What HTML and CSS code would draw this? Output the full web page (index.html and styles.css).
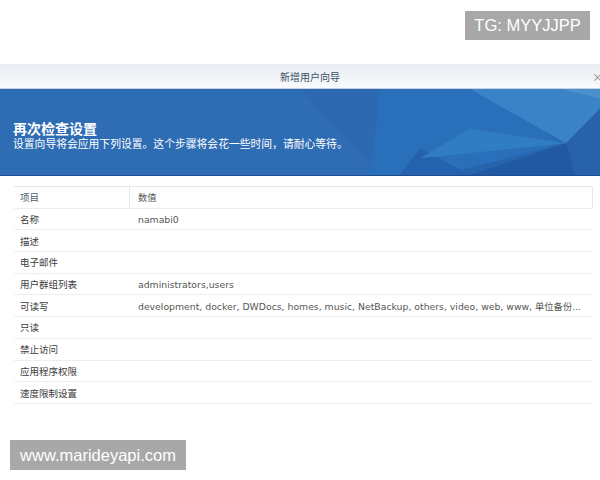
FILE: index.html
```html
<!DOCTYPE html>
<html lang="zh-CN">
<head>
  <meta charset="UTF-8">
  <title>新增用户向导</title>
  <link rel="stylesheet" href="styles.css">
</head>
<body>
<div class="page">
  <div class="top-space"></div>

  <div class="wizard">
    <div class="wizard-title">
      <span>新增用户向导</span>
      <span class="wizard-close">×</span>
    </div>

    <div class="banner">
      <svg class="banner-art" viewBox="0 0 600 87" preserveAspectRatio="none">
        <polygon points="300,0 600,0 600,87 380,87" fill="#2c69b1"/>
        <polygon points="380,0 490,0 560,55 470,87 370,87" fill="#2a6fba"/>
        <polygon points="470,0 560,0 600,10 600,20 566,55" fill="#3a83c6"/>
        <polygon points="560,0 600,0 600,10" fill="#4a8fce"/>
        <polygon points="566,55 470,87 440,87" fill="#2764ac"/>
        <polygon points="566,55 600,20 600,87 575,87" fill="#2762ab"/>
        <polygon points="566,55 575,87 470,87" fill="#2159a2"/>
        <polygon points="420,60 470,87 400,87" fill="#2562ad"/>
        <polygon points="470,40 566,55 420,70" fill="#317dc2"/>
      </svg>
      <div class="banner-text">
        <h2 class="banner-title">再次检查设置</h2>
        <p class="banner-desc">设置向导将会应用下列设置。这个步骤将会花一些时间，请耐心等待。</p>
      </div>
    </div>

    <div class="summary">
      <div class="summary-row summary-head">
        <div class="cell key">项目</div>
        <div class="cell val">数值</div>
      </div>
      <div class="summary-row">
        <div class="cell key">名称</div>
        <div class="cell val">namabi0</div>
      </div>
      <div class="summary-row">
        <div class="cell key">描述</div>
        <div class="cell val"></div>
      </div>
      <div class="summary-row">
        <div class="cell key">电子邮件</div>
        <div class="cell val"></div>
      </div>
      <div class="summary-row">
        <div class="cell key">用户群组列表</div>
        <div class="cell val">administrators,users</div>
      </div>
      <div class="summary-row">
        <div class="cell key">可读写</div>
        <div class="cell val">development, docker, DWDocs, homes, music, NetBackup, others, video, web, www, 单位备份...</div>
      </div>
      <div class="summary-row">
        <div class="cell key">只读</div>
        <div class="cell val"></div>
      </div>
      <div class="summary-row">
        <div class="cell key">禁止访问</div>
        <div class="cell val"></div>
      </div>
      <div class="summary-row">
        <div class="cell key">应用程序权限</div>
        <div class="cell val"></div>
      </div>
      <div class="summary-row">
        <div class="cell key">速度限制设置</div>
        <div class="cell val"></div>
      </div>
    </div>
  </div>

  <div class="stamp stamp-tg">TG: MYYJJPP</div>
  <div class="stamp stamp-site">www.marideyapi.com</div>
</div>
</body>
</html>
```

FILE: styles.css
```css
* {
  box-sizing: border-box;
}

html, body {
  margin: 0;
  padding: 0;
  background: #fff;
}

.page {
  position: relative;
  width: 600px;
  height: 480px;
  overflow: hidden;
  font-family: "DejaVu Sans", "Noto Sans CJK SC", sans-serif;
}

.top-space {
  height: 64px;
}

/* Dialog title bar */
.wizard-title {
  position: relative;
  height: 25px;
  display: flex;
  align-items: center;
  justify-content: center;
  background: linear-gradient(#e9edf2, #f9fafc);
  border-bottom: 1px solid #c9d3de;
  color: #3a4f68;
  font-size: 10px;
  font-family: "Noto Sans CJK SC", sans-serif;
  padding-left: 20px;
}

.wizard-close {
  position: absolute;
  right: -3px;
  top: 5px;
  color: #888;
  font-size: 11px;
}

/* Blue banner */
.banner {
  position: relative;
  height: 87px;
  background: #2e6cb4;
  border-bottom: 1px solid #1d4f8e;
  display: flex;
  align-items: center;
  overflow: hidden;
}

.banner-art {
  position: absolute;
  inset: 0;
  width: 100%;
  height: 100%;
}

.banner-text {
  position: relative;
  padding: 6px 0 0 13px;
  color: #fff;
  font-family: "Noto Sans CJK SC", sans-serif;
}

.banner-title {
  margin: 0;
  font-size: 14px;
  font-weight: bold;
  line-height: 16px;
}

.banner-desc {
  margin: 0;
  font-size: 10.8px;
  line-height: 15px;
}

/* Summary grid */
.summary {
  margin: 10px 7px 0 14px;
  border-top: 1px solid #e4e8ec;
}

.summary-row {
  display: grid;
  grid-template-columns: 116px 1fr;
  height: 21.7px;
  border-bottom: 1px solid #eceff2;
  align-items: center;
  font-size: 9.5px;
  color: #3c3c3c;
}

.summary-head {
  border-right: 1px solid #e4e8ec;
  color: #4d5e70;
}

.summary-head .key {
  border-right: 1px solid #e4e8ec;
}

.cell {
  height: 100%;
  display: flex;
  align-items: center;
  white-space: nowrap;
  overflow: hidden;
}

.key {
  padding-left: 6px;
  font-family: "Noto Sans CJK SC", sans-serif;
}

.val {
  padding-left: 8px;
  color: #555;
  font-size: 9.3px;
}

/* Watermarks */
.stamp {
  position: absolute;
  background: #a8a8a8;
  color: #fff;
  font-family: "Liberation Sans", Arial, sans-serif;
  display: flex;
  align-items: center;
  justify-content: center;
}

.stamp-tg {
  top: 11px;
  left: 465px;
  width: 125px;
  height: 29px;
  font-size: 16.5px;
}

.stamp-site {
  top: 440px;
  left: 10px;
  width: 176px;
  height: 30px;
  font-size: 16.5px;
}
```
